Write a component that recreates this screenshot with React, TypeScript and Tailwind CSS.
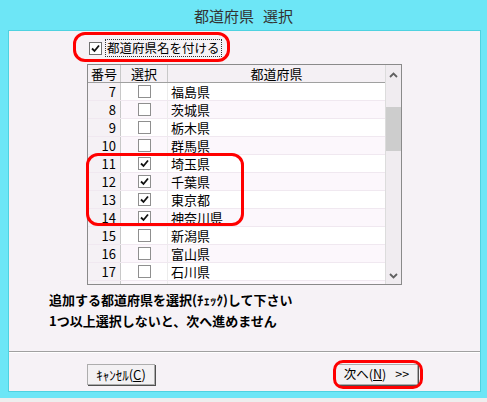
import React from 'react';

const prefectures = [
  { no: 7, name: '福島県', checked: false },
  { no: 8, name: '茨城県', checked: false },
  { no: 9, name: '栃木県', checked: false },
  { no: 10, name: '群馬県', checked: false },
  { no: 11, name: '埼玉県', checked: true },
  { no: 12, name: '千葉県', checked: true },
  { no: 13, name: '東京都', checked: true },
  { no: 14, name: '神奈川県', checked: true },
  { no: 15, name: '新潟県', checked: false },
  { no: 16, name: '富山県', checked: false },
  { no: 17, name: '石川県', checked: false },
];

const CheckBox: React.FC<{ checked: boolean; dark?: boolean }> = ({ checked, dark }) => (
  <span
    className={`w-[13px] h-[13px] bg-white border flex items-center justify-center ${
      dark ? 'border-[#707070]' : 'border-[#8f8f8f]'
    }`}
  >
    {checked && (
      <svg width="9" height="9" viewBox="0 0 9 9">
        <path d="M1 4.5 L3.5 7 L8 1.5" fill="none" stroke="#111" strokeWidth="1.8" />
      </svg>
    )}
  </span>
);

const Chevron: React.FC<{ down?: boolean }> = ({ down }) => (
  <svg width="9" height="6" viewBox="0 0 9 6">
    <path d={down ? 'M1 1 L4.5 4.5 L8 1' : 'M1 5 L4.5 1.5 L8 5'} fill="none" stroke="#606060" strokeWidth="1.8" />
  </svg>
);

const App: React.FC = () => {
  return (
    <div
      className="w-[487px] h-[402px] bg-[#6de6f6] flex flex-col overflow-hidden"
      style={{ fontFamily: '"Noto Sans CJK JP", "Liberation Sans", sans-serif' }}
    >
      <div className="h-[30px] flex items-center justify-center text-[15px] text-[#333] pt-[2px]">
        <span>都道府県</span>
        <span className="ml-[9px]">選択</span>
      </div>

      <div className="ml-[8px] w-[473px] h-[362px] bg-[#f6f2f6] border border-[#4fd2e0] relative flex flex-col">
        {/* top checkbox */}
        <div className="mt-[8px] ml-[80px] h-[18px] flex items-center">
          <CheckBox checked dark />
          <span className="ml-[3px] px-[1px] h-[18px] flex items-center text-[12.5px] text-black border border-dotted border-[#333] leading-none">
            都道府県名を付ける
          </span>
        </div>

        {/* grid */}
        <div className="mt-[7px] ml-[78px] w-[315px] h-[221px] border border-[#8a8a8a] bg-white flex overflow-hidden">
          <div className="w-[297px] flex flex-col">
            <div className="h-[18px] shrink-0 flex bg-[#f4f0f4] border-b border-[#a0a0a0] text-[13px] text-black leading-none">
              <div className="w-[33px] flex items-center justify-center border-r border-[#c8c8c8]">番号</div>
              <div className="w-[47px] flex items-center justify-center border-r border-[#c8c8c8]">選択</div>
              <div className="w-[217px] flex items-center justify-center">都道府県</div>
            </div>
            {prefectures.map((p, i) => (
              <div
                key={p.no}
                className={`h-[18px] shrink-0 flex border-b border-[#f0e8f0] text-[13px] text-black leading-none ${
                  i % 2 === 0 ? 'bg-white' : 'bg-[#fcf7fc]'
                }`}
              >
                <div className="w-[33px] flex items-center justify-end pr-[4px] bg-[#f5f1f5] border-r border-[#c8c8c8]">
                  {p.no}
                </div>
                <div className="w-[47px] flex items-center justify-center border-r border-[#ececec]">
                  <CheckBox checked={p.checked} />
                </div>
                <div className="w-[217px] flex items-center pl-[3px]">{p.name}</div>
              </div>
            ))}
            <div className="h-[18px] shrink-0 flex bg-[#fcf7fc]">
              <div className="w-[33px] bg-[#f5f1f5] border-r border-[#c8c8c8]" />
              <div className="w-[47px] border-r border-[#ececec]" />
            </div>
          </div>
          <div className="w-[16px] bg-[#f0ecf0] border-l border-[#dcdcdc] flex flex-col items-center">
            <div className="h-[20px] flex items-center justify-center">
              <Chevron />
            </div>
            <div className="mt-[22px] w-[15px] h-[44px] bg-[#cdcdcd]" />
            <div className="mt-auto h-[16px] flex items-center justify-center">
              <Chevron down />
            </div>
          </div>
        </div>

        {/* message */}
        <div className="mt-[4px] ml-[40px] text-[13px] font-bold text-black">
          <div className="h-[21px] flex items-center leading-none">追加する都道府県を選択(ﾁｪｯｸ)して下さい</div>
          <div className="h-[21px] flex items-center leading-none">1つ以上選択しないと、次へ進めません</div>
        </div>

        {/* footer */}
        <div className="mt-auto h-[40px] border-t border-[#a0a0a0] flex flex-col">
          <div className="h-[1px] bg-white" />
          <div className="pt-[11px] pl-[78px] flex">
            <button className="w-[68px] h-[21px] bg-[#f3f1f3] border border-[#adadad] shadow-[1px_1px_0_#505050] text-[13px] text-black flex items-center justify-center leading-none">
              ｷｬﾝｾﾙ(<span className="underline">C</span>)
            </button>
            <button className="ml-[180px] w-[83px] h-[21px] bg-[#f3f1f3] border border-[#adadad] shadow-[1px_1px_0_#505050] text-[12.5px] text-black flex items-center justify-center leading-none">
              次へ(<span className="underline">N</span>)<span className="ml-[9px]">&gt;&gt;</span>
            </button>
          </div>
        </div>

        {/* red highlight rings */}
        <div className="absolute left-[64px] top-[1px] w-[157px] h-[30px] border-[3px] border-[#f00] rounded-[12px]" />
        <div className="absolute left-[77px] top-[122px] w-[158px] h-[73px] border-[3px] border-[#f00] rounded-[12px]" />
        <div className="absolute left-[324px] top-[329px] w-[90px] h-[29px] border-[3px] border-[#f00] rounded-[10px]" />
      </div>

      <div className="mt-auto h-[4px] bg-[#eeeeee]" />
    </div>
  );
};

export default App;
